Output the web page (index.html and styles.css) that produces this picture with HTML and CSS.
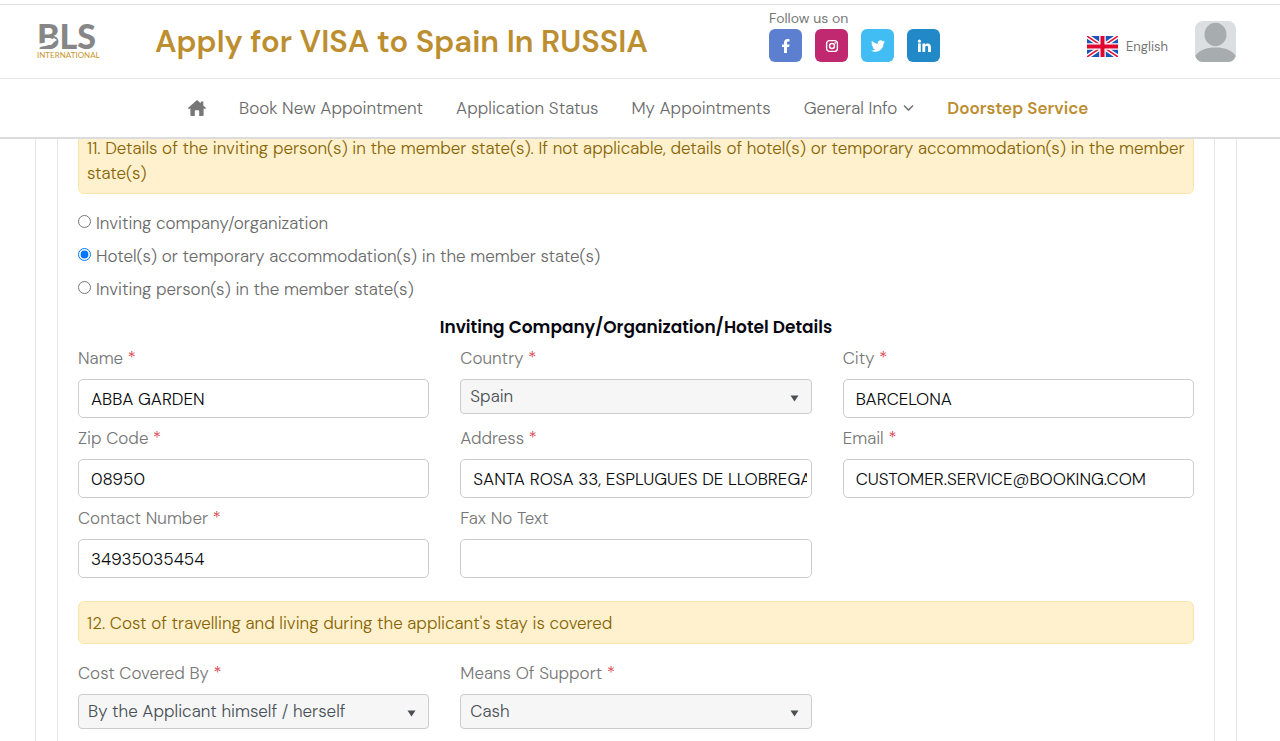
FILE: index.html
```
<!DOCTYPE html>
<html lang="en">
<head>
<meta charset="utf-8">
<meta name="viewport" content="width=device-width, initial-scale=1">
<title>Apply for VISA to Spain In RUSSIA</title>
<link rel="stylesheet" href="styles.css">
</head>
<body>
<header class="site-header">
  <div class="top-bar">
    <a href="#" class="logo" aria-label="BLS International">
      <span class="logo-name">BLS</span>
      <span class="logo-sub">INTERNATIONAL</span>
      <svg class="logo-cut" width="22" height="12" viewBox="0 0 22 12"><path fill="#fff" d="M0 6.500Q10 7 18 1L21 3Q13 9 6 9.500L0 12Z"/></svg>
    </a>
    <h1 class="site-title">Apply for VISA to Spain In RUSSIA</h1>
    <div class="social">
      <span class="social-label">Follow us on</span>
      <div class="social-links">
        <a href="#" class="social-link facebook" aria-label="Facebook"><svg width="14" height="14" viewBox="0 0 14 14"><path fill="#fff" d="M5 14V8H3V5.500h2V4c0-2.600 1.300-4 3.600-4 .9 0 1.700.1 1.900.2v2.300H9.200C8.200 2.500 8 3 8 3.800v1.700h2.500L10.100 8H8v6z"/></svg></a>
        <a href="#" class="social-link instagram" aria-label="Instagram"><svg width="14" height="14" viewBox="0 0 14 14"><rect x="1.600" y="1.600" width="10.800" height="10.800" rx="3" fill="none" stroke="#fff" stroke-width="1.400"/><circle cx="7" cy="7" r="2.500" fill="none" stroke="#fff" stroke-width="1.400"/><circle cx="10.200" cy="3.900" r=".8" fill="#fff"/></svg></a>
        <a href="#" class="social-link twitter" aria-label="Twitter"><svg width="14" height="14" viewBox="0 0 512 512"><path fill="#fff" d="M459.400 151.700c.3 4.500.3 9.100.3 13.600 0 138.700-105.600 298.600-298.600 298.600-59.500 0-114.700-17.200-161.100-47.100 8.400 1 16.600 1.300 25.300 1.300 49.100 0 94.200-16.600 130.300-44.800-46.100-1-84.800-31.200-98.100-72.800 6.500 1 13 1.600 19.800 1.600 9.400 0 18.800-1.300 27.600-3.600-48.100-9.700-84.100-52-84.100-103v-1.300c14 7.800 30.200 12.700 47.400 13.300-28.300-18.800-46.800-51-46.800-87.400 0-19.500 5.200-37.400 14.300-53 51.700 63.700 129.300 105.300 216.400 109.800-1.600-7.800-2.600-15.900-2.600-24 0-57.800 46.800-104.900 104.900-104.900 30.200 0 57.500 12.700 76.700 33.100 23.700-4.500 46.500-13.300 66.600-25.300-7.800 24.400-24.400 44.800-46.100 57.800 21.100-2.300 41.600-8.100 60.400-16.200-14.300 20.800-32.200 39.300-52.600 54.300z"/></svg></a>
        <a href="#" class="social-link linkedin" aria-label="LinkedIn"><svg width="14" height="14" viewBox="0 0 14 14"><path fill="#fff" d="M1 4.600h2.800V13H1zM2.400.6a1.600 1.600 0 1 1 0 3.200 1.600 1.600 0 0 1 0-3.200zM5.400 4.600h2.700v1.200c.5-.9 1.400-1.400 2.600-1.400 2.600 0 3.200 1.700 3.200 4V13h-2.800V8.900c0-1 0-2.200-1.300-2.200S8.200 7.800 8.200 8.900V13H5.400z"/></svg></a>
      </div>
    </div>
    <a href="#" class="language">
      <svg width="31" height="21" viewBox="0 0 31 21">
        <rect width="31" height="21" fill="#1b55b5"/>
        <path d="M0 0 31 21M31 0 0 21" stroke="#fff" stroke-width="4.500"/>
        <path d="M0 0 31 21M31 0 0 21" stroke="#e0143c" stroke-width="1.500"/>
        <path d="M15.500 0V21M0 10.500H31" stroke="#fff" stroke-width="6.500"/>
        <path d="M15.500 0V21M0 10.500H31" stroke="#e0062f" stroke-width="4"/>
      </svg>
      <span>English</span>
    </a>
    <a href="#" class="avatar" aria-label="Account">
      <svg width="41" height="41" viewBox="0 0 41 41"><rect width="41" height="41" fill="#dcdfe1"/><ellipse cx="20.500" cy="13.500" rx="11" ry="11.800" fill="#a7adaf"/><path fill="#a7adaf" d="M0 41V35C4 29 12 26.500 20.500 26.500S37 29 41 35V41Z"/></svg>
    </a>
  </div>
  <nav class="main-nav" aria-label="Main">
    <a href="#" class="nav-home" aria-label="Home"><svg width="18" height="16" viewBox="0 0 18 16"><path fill="#777" d="M9 0 12.800 3.300V1.500H15.300V5.500L18 8 17 9.200 15.600 8.300V15Q15.600 16 14.600 16H11.200V11Q11.200 10.200 10.400 10.200H7.600Q6.800 10.200 6.800 11V16H3.400Q2.400 16 2.400 15V8.300L1 9.200 0 8Z"/></svg></a>
    <a href="#">Book New Appointment</a>
    <a href="#">Application Status</a>
    <a href="#">My Appointments</a>
    <a href="#" class="nav-menu">General Info <svg width="11" height="8" viewBox="0 0 11 8"><path d="m1 1.500 4.500 4.500L10 1.500" fill="none" stroke="#777" stroke-width="1.600"/></svg></a>
    <a href="#" class="nav-strong">Doorstep Service</a>
  </nav>
</header>
<main class="page">
  <div class="frame">
    <form class="panel">
      <p class="notice">11. Details of the inviting person(s) in the member state(s). If not applicable, details of hotel(s) or temporary accommodation(s) in the member state(s)</p>
      <div class="choices">
        <label class="choice"><input type="radio" name="inviter"> Inviting company/organization</label>
        <label class="choice"><input type="radio" name="inviter" checked> Hotel(s) or temporary accommodation(s) in the member state(s)</label>
        <label class="choice"><input type="radio" name="inviter"> Inviting person(s) in the member state(s)</label>
      </div>
      <h2 class="section-title">Inviting Company/Organization/Hotel Details</h2>
      <div class="fields">
        <div class="field"><label for="name">Name <span class="required">*</span></label><input id="name" type="text" value="ABBA GARDEN"></div>
        <div class="field"><label for="country">Country <span class="required">*</span></label><select id="country"><option>Spain</option></select></div>
        <div class="field"><label for="city">City <span class="required">*</span></label><input id="city" type="text" value="BARCELONA"></div>
        <div class="field"><label for="zip">Zip Code <span class="required">*</span></label><input id="zip" type="text" value="08950"></div>
        <div class="field"><label for="address">Address <span class="required">*</span></label><input id="address" type="text" value="SANTA ROSA 33, ESPLUGUES DE LLOBREGAT"></div>
        <div class="field"><label for="email">Email <span class="required">*</span></label><input id="email" type="text" value="CUSTOMER.SERVICE@BOOKING.COM"></div>
        <div class="field"><label for="phone">Contact Number <span class="required">*</span></label><input id="phone" type="text" value="34935035454"></div>
        <div class="field"><label for="fax">Fax No Text</label><input id="fax" type="text"></div>
      </div>
      <p class="notice notice-spaced">12. Cost of travelling and living during the applicant's stay is covered</p>
      <div class="fields">
        <div class="field"><label for="cost">Cost Covered By <span class="required">*</span></label><select id="cost"><option>By the Applicant himself / herself</option></select></div>
        <div class="field"><label for="support">Means Of Support <span class="required">*</span></label><select id="support"><option>Cash</option></select></div>
      </div>
    </form>
  </div>
</main>
</body>
</html>
```

FILE: styles.css
```
* { box-sizing: border-box; }

body {
  margin: 0;
  background: #fff;
  color: #6a6a6a;
  font: 300 17px/25px "DM Sans", Inter, sans-serif;
  overflow-x: hidden;
}

a { color: inherit; text-decoration: none; }
svg { display: block; }

.site-header {
  position: sticky;
  top: 0;
  z-index: 2;
  padding-top: 4px;
  background: #fff;
  border-bottom: 2px solid #dcdcde;
}

.top-bar {
  display: grid;
  grid-template-columns: 118px minmax(0, 1fr) 318px 108px 41px;
  align-items: center;
  height: 75px;
  padding: 0 44px 0 37px;
  border-top: 1px solid #dfdfdf;
  border-bottom: 1px solid #e8e8ea;
}

.logo { position: relative; display: block; }
.logo-name {
  display: block;
  color: #868686;
  font: 900 34px/24px Lato, sans-serif;
}
.logo-sub {
  display: block;
  margin-top: 3px;
  color: #c8962e;
  font: 8px/8px Lato, sans-serif;
}
.logo-cut { position: absolute; left: -1px; top: 13px; }

.site-title {
  margin: 0;
  color: #bc8e30;
  font-size: 31px;
  font-weight: 600;
  line-height: 40px;
  white-space: nowrap;
}

.social-label { display: block; color: #777; font-size: 14px; font-weight: 400; line-height: 22px; }
.social-links { display: flex; gap: 13px; padding-bottom: 14px; }
.social-link {
  display: grid;
  place-items: center;
  width: 33px;
  height: 33px;
  border-radius: 6px;
}
.facebook { background: #5c80cf; }
.instagram { background: #c02870; }
.twitter { background: #41bdf3; }
.linkedin { background: #2189c7; }

.language {
  display: flex;
  align-items: center;
  gap: 8px;
  padding-top: 10px;
  color: #777;
  font-size: 13px;
  font-weight: 400;
}
.avatar svg { border-radius: 8px; }

.main-nav {
  display: flex;
  align-items: center;
  gap: 33px;
  height: 58px;
  padding-left: 188px;
  white-space: nowrap;
}
.nav-menu { display: flex; align-items: center; gap: 6px; }
.nav-strong { color: #bc8e30; font-weight: 600; }

.page { margin-top: -13px; padding: 0 43px 0 35px; }
.frame { padding: 0 21px; border: solid #e6e6e8; border-width: 0 1px; }
.panel { padding: 0 20px 20px; border: solid #e6e6e8; border-width: 0 1px; }

.notice {
  margin: 0;
  padding: 9px 8px 7px;
  color: #866404;
  background: #fff1cd;
  border: 1px solid #fae6ac;
  border-radius: 6px;
}
.notice-spaced { margin: 23px 0 17px; }

.choices { padding: 13px 0 9px; }
.choice { display: flex; align-items: center; gap: 5px; height: 33px; }
.choice input { width: 13px; height: 13px; margin: 0 0 4px; }

.section-title {
  margin: 0 0 6px;
  color: #080812;
  font: 600 17px/25px Poppins, "DM Sans", sans-serif;
  text-align: center;
}

.fields {
  display: grid;
  grid-template-columns: repeat(3, minmax(0, 1fr));
  gap: 8px 31px;
}
.field { display: flex; flex-direction: column; gap: 8px; }
.field label { color: #777; }
.required { color: #d9434f; }

.field input,
.field select {
  width: 100%;
  border: 1px solid #ccc;
  font: inherit;
}
.field input {
  height: 39px;
  padding: 0 4px 0 12px;
  color: #080a0d;
  background: #fff;
  border-radius: 5px;
}
.field select {
  height: 35px;
  padding: 0 9px;
  color: #495057;
  background: #f6f6f6 url("data:image/svg+xml,%3Csvg xmlns='http://www.w3.org/2000/svg' width='9' height='7'%3E%3Cpath d='M.5.500h8l-4 6z' fill='%23495057'/%3E%3C/svg%3E") right 12px top 15px no-repeat;
  border-radius: 4px;
  appearance: none;
}
```
